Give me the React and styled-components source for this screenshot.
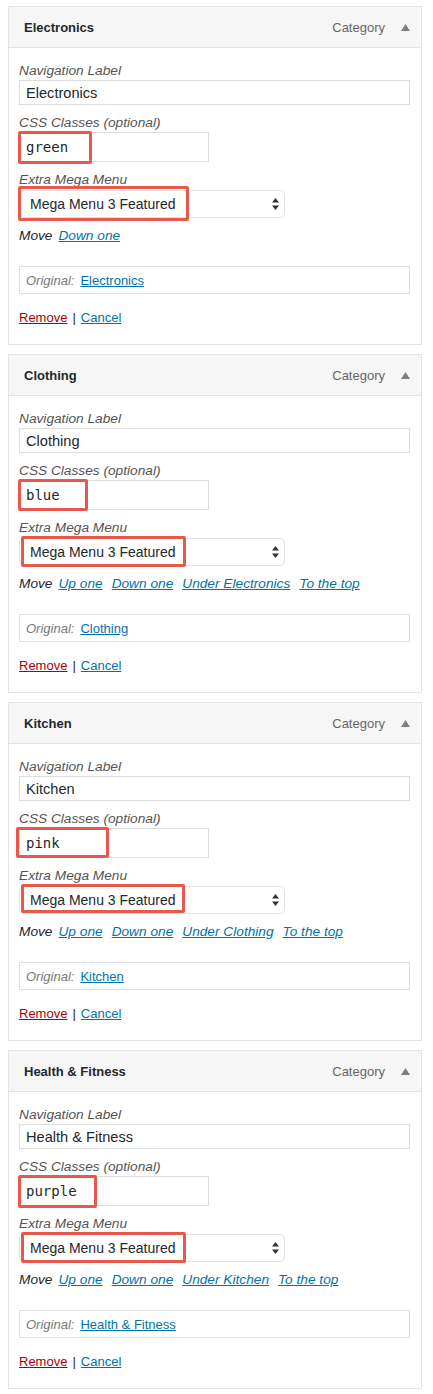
import React from 'react';
import styled, { createGlobalStyle } from 'styled-components';

const GlobalStyle = createGlobalStyle`
  body {
    margin: 0;
    background: #fff;
    font-family: "Liberation Sans", Arial, sans-serif;
    color: #23282d;
  }
`;

const Page = styled.div`
  padding: 6px 8px 5px;
  display: flex;
  flex-direction: column;
  gap: 9px;
`;

const Panel = styled.section`
  width: 414px;
  box-sizing: border-box;
  border: 1px solid #e3e3e3;
  background: #fff;
`;

const Header = styled.header`
  height: 40px;
  display: flex;
  align-items: center;
  padding: 0 11px 0 15px;
  background: #f6f6f6;
  border-bottom: 1px solid #e3e3e3;
`;

const Title = styled.h3`
  margin: 0;
  flex: 1;
  font-size: 13px;
  font-weight: bold;
  color: #23282d;
`;

const ItemType = styled.span`
  font-size: 13px;
  color: #666;
  margin-right: 16px;
`;

const Toggle = styled.svg`
  width: 9px;
  height: 7px;
  display: block;
`;

const Body = styled.div`
  padding: 14px 11px 17px 10px;
`;

const Field = styled.div`
  & + & {
    margin-top: 9px;
  }
`;

const Label = styled.div`
  font-size: 13.7px;
  line-height: 18px;
  font-style: italic;
  color: #555;
`;

const Marked = styled.div`
  position: relative;
  width: ${(p) => p.$width}px;
  margin-top: ${(p) => p.$top || 0}px;
`;

const TextInput = styled.div`
  box-sizing: border-box;
  width: ${(p) => p.$width}px;
  height: ${(p) => p.$height}px;
  border: 1px solid #ddd;
  padding: 0 6px;
  display: flex;
  align-items: center;
  font-size: ${(p) => (p.$mono ? '14px' : '14.6px')};
  color: #23282d;
  font-family: ${(p) => (p.$mono ? '"DejaVu Sans Mono", monospace' : '"Liberation Sans", Arial, sans-serif')};
  background: #fff;
`;

const Select = styled.div`
  box-sizing: border-box;
  width: 266px;
  height: 28px;
  border: 1px solid #e2e2e2;
  border-radius: 5px;
  padding: 0 5px 0 10px;
  display: flex;
  align-items: center;
  justify-content: space-between;
  font-size: 14px;
  color: #23282d;
  background: #fff;
`;

const Highlight = styled.div`
  position: absolute;
  box-sizing: border-box;
  left: ${(p) => p.$l}px;
  top: ${(p) => p.$t}px;
  width: ${(p) => p.$w}px;
  height: ${(p) => p.$h}px;
  border: 3px solid #e9584d;
  border-radius: 2px;
  pointer-events: none;
`;

const MoveRow = styled.div`
  margin-top: 9px;
  display: flex;
  gap: 9px;
  font-size: 13.7px;
  line-height: 18px;
  font-style: italic;
  color: #23282d;
`;

const MoveLabel = styled.span`
  margin-right: -3px;
`;

const Link = styled.a`
  color: ${(p) => (p.$danger ? '#a00' : '#0073aa')};
  text-decoration: underline;
  cursor: pointer;
`;

const Original = styled.div`
  box-sizing: border-box;
  margin-top: 21px;
  width: 391px;
  height: 28px;
  border: 1px solid #ddd;
  padding: 0 6px;
  display: flex;
  align-items: center;
  gap: 6px;
  font-size: 13px;
`;

const OriginalLabel = styled.span`
  font-style: italic;
  color: #777;
`;

const Actions = styled.div`
  margin-top: 15px;
  font-size: 13px;
  line-height: 18px;
  color: #23282d;
`;

const Sep = styled.span`
  margin: 0 5px;
`;

const ArrowUp = () => (
  <Toggle viewBox="0 0 9 7">
    <polygon points="4.5,0 9,7 0,7" fill="#7a7f84" />
  </Toggle>
);

const SelectArrows = () => (
  <svg width="7" height="12" viewBox="0 0 7 12">
    <polygon points="3.5,0 7,4.5 0,4.5" fill="#333" />
    <polygon points="0,7.5 7,7.5 3.5,12" fill="#333" />
  </svg>
);

const items = [
  {
    title: 'Electronics',
    cls: 'green',
    moves: ['Down one'],
    cssMark: { l: -1, t: -1, w: 74, h: 33 },
    selMark: { l: -1, t: -4, w: 171, h: 35 },
  },
  {
    title: 'Clothing',
    cls: 'blue',
    moves: ['Up one', 'Down one', 'Under Electronics', 'To the top'],
    cssMark: { l: -1, t: -1, w: 70, h: 32 },
    selMark: { l: 2, t: -2, w: 165, h: 31 },
  },
  {
    title: 'Kitchen',
    cls: 'pink',
    moves: ['Up one', 'Down one', 'Under Clothing', 'To the top'],
    cssMark: { l: -3, t: -1, w: 93, h: 31 },
    selMark: { l: 2, t: -2, w: 164, h: 29 },
  },
  {
    title: 'Health & Fitness',
    cls: 'purple',
    moves: ['Up one', 'Down one', 'Under Kitchen', 'To the top'],
    cssMark: { l: -1, t: -1, w: 79, h: 33 },
    selMark: { l: 2, t: -2, w: 165, h: 31 },
  },
];

const MenuItem = ({ item }) => (
  <Panel>
    <Header>
      <Title>{item.title}</Title>
      <ItemType>Category</ItemType>
      <ArrowUp />
    </Header>
    <Body>
      <Field>
        <Label>Navigation Label</Label>
        <TextInput $width={391} $height={25}>{item.title}</TextInput>
      </Field>
      <Field>
        <Label>CSS Classes (optional)</Label>
        <Marked $width={190}>
          <TextInput $width={190} $height={30} $mono>{item.cls}</TextInput>
          <Highlight $l={item.cssMark.l} $t={item.cssMark.t} $w={item.cssMark.w} $h={item.cssMark.h} />
        </Marked>
      </Field>
      <Field>
        <Label>Extra Mega Menu</Label>
        <Marked $width={266} $top={1}>
          <Select>
            <span>Mega Menu 3 Featured</span>
            <SelectArrows />
          </Select>
          <Highlight $l={item.selMark.l} $t={item.selMark.t} $w={item.selMark.w} $h={item.selMark.h} />
        </Marked>
      </Field>
      <MoveRow>
        <MoveLabel>Move</MoveLabel>
        {item.moves.map((m) => (
          <Link key={m}>{m}</Link>
        ))}
      </MoveRow>
      <Original>
        <OriginalLabel>Original:</OriginalLabel>
        <Link>{item.title}</Link>
      </Original>
      <Actions>
        <Link $danger>Remove</Link>
        <Sep>|</Sep>
        <Link>Cancel</Link>
      </Actions>
    </Body>
  </Panel>
);

const App = () => (
  <>
    <GlobalStyle />
    <Page>
      {items.map((item) => (
        <MenuItem key={item.title} item={item} />
      ))}
    </Page>
  </>
);

export default App;
